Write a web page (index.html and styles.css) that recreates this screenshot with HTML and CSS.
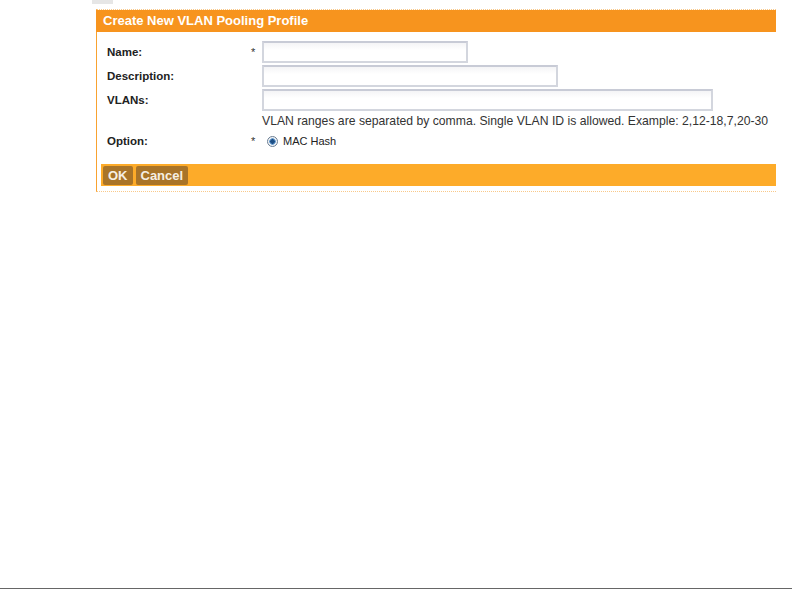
FILE: index.html
```html
<!DOCTYPE html>
<html lang="en">
<head>
    <meta charset="UTF-8">
    <title>Create New VLAN Pooling Profile</title>
    <link rel="stylesheet" href="styles.css">
</head>
<body>
    <div class="page">
        <div class="tab-stub"></div>

        <div class="dialog">
            <div class="dialog-title">Create New VLAN Pooling Profile</div>

            <form class="dialog-body">
                <div class="form-row">
                    <label for="name">Name:</label>
                    <span class="required">*</span>
                    <input type="text" id="name" class="field field-short">
                </div>

                <div class="form-row">
                    <label for="description">Description:</label>
                    <span class="required"></span>
                    <input type="text" id="description" class="field field-medium">
                </div>

                <div class="form-row">
                    <label for="vlans">VLANs:</label>
                    <span class="required"></span>
                    <input type="text" id="vlans" class="field field-long">
                </div>
                <div class="form-row hint-row">
                    <span></span>
                    <span></span>
                    <p class="hint">VLAN ranges are separated by comma. Single VLAN ID is allowed. Example: 2,12-18,7,20-30</p>
                </div>

                <div class="form-row option-row">
                    <label>Option:</label>
                    <span class="required">*</span>
                    <label class="radio">
                        <span class="radio-dot"></span>
                        MAC Hash
                    </label>
                </div>
            </form>

            <div class="button-bar">
                <button type="button" class="btn">OK</button>
                <button type="button" class="btn">Cancel</button>
            </div>
        </div>

        <div class="page-footer"></div>
    </div>
</body>
</html>
```

FILE: styles.css
```css
* {
    margin: 0;
    padding: 0;
    box-sizing: border-box;
}

body {
    font-family: 'Liberation Sans', Arial, sans-serif;
    background: white;
    color: #222;
}

.page {
    min-height: 100vh;
    display: flex;
    flex-direction: column;
}

.tab-stub {
    width: 21px;
    height: 4px;
    margin-left: 92px;
    background: #e6e6e6;
}

.dialog {
    width: 680px;
    margin: 5px 0 0 96px;
    border-top: 1px dotted #f9c98a;
    border-bottom: 1px dotted #f9c98a;
    border-left: 1px solid #f8a230;
    padding-bottom: 5px;
}

.dialog-title {
    background: #f7941e;
    color: white;
    font-weight: bold;
    font-size: 13px;
    height: 22px;
    line-height: 22px;
    padding-left: 7px;
    margin-left: -1px;
}

.dialog-body {
    padding: 9px 0 15px 10px;
}

.form-row {
    display: grid;
    grid-template-columns: 144px 11px 1fr;
    align-items: center;
    margin-bottom: 2px;
}

.form-row label {
    font-size: 11.5px;
    font-weight: bold;
    color: #222;
}

.required {
    font-size: 11px;
    color: #333;
}

.field {
    height: 22px;
    border: 2px solid #d3d6de;
    border-top-color: #c8cbd6;
    background: linear-gradient(#f4f4f6, #fff 40%);
}

.field-short { width: 206px; }
.field-medium { width: 296px; }
.field-long { width: 451px; }

.hint-row {
    margin: 3px 0 0;
}

.hint {
    font-size: 12.2px;
    color: #333;
}

.option-row {
    margin-top: 7px;
}

.form-row .radio {
    display: flex;
    align-items: center;
    gap: 5px;
    font-weight: normal;
    font-size: 11px;
    padding-left: 5px;
}

.radio-dot {
    width: 11px;
    height: 11px;
    border-radius: 50%;
    border: 1px solid #6a7d92;
    background: radial-gradient(circle, #1d4f86 0 2px, #6a9ed0 2.5px 3px, #f2f4f7 3.5px);
}

.button-bar {
    margin-left: 4px;
    background: #fdab29;
    height: 22px;
    display: flex;
    align-items: center;
    gap: 3px;
    padding-left: 2px;
}

.btn {
    background: #a97428;
    color: #f6efe3;
    border: none;
    border-radius: 2px;
    font-family: 'Liberation Sans', Arial, sans-serif;
    font-weight: bold;
    font-size: 13px;
    height: 19px;
    padding: 0 5px;
    cursor: pointer;
}

.page-footer {
    margin-top: auto;
    border-bottom: 1px solid #666;
}
```
